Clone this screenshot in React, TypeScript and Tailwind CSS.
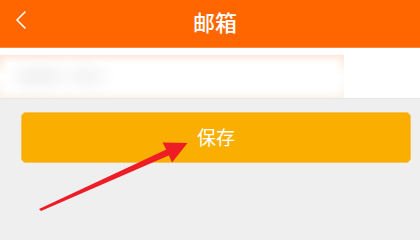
export default function App() {
  return (
    <div
      className="relative w-[420px] h-[240px] overflow-hidden bg-[#efefef]"
      style={{ fontFamily: '"Noto Sans CJK SC", "Noto Sans", sans-serif' }}
    >
      {/* header */}
      <div className="h-12 bg-[#ff6600] border-b border-[#ff8a3d] flex items-center px-[15px]">
        <svg width="12" height="18" viewBox="0 0 12 18" fill="none" className="-mt-[8px]">
          <path d="M10 1 L2 9 L10 17" stroke="#ffffff" strokeWidth="1.6" strokeLinecap="round" strokeLinejoin="round" />
        </svg>
        <div className="flex-1 flex justify-center pl-[10px]">
          <span className="text-white text-[22px] font-medium leading-none -mt-[6px]">邮箱</span>
        </div>
        <div className="w-[12px]" />
      </div>

      {/* email input row (blurred) */}
      <div className="h-[51px] bg-white border-b border-[#e6e6e6] pt-[7px]">
        <div className="w-[344px] h-[43px] bg-gradient-to-b from-[#fde6d8] via-white to-[#fbf3ea] p-[4px]">
          <div className="h-full bg-white blur-[3px] flex items-center gap-[6px] pl-[12px]">
            <div className="w-[46px] h-[16px] rounded-full bg-[#efefef] blur-[7px]" />
            <div className="w-[36px] h-[15px] rounded-full bg-[#f1f1f1] blur-[7px]" />
          </div>
        </div>
      </div>

      {/* save button */}
      <div className="ml-[21px] mr-[9px] mt-[13px] h-[51px] rounded-[5px] bg-[#f9ae00] border border-[#f7c45a] flex items-center justify-center">
        <span className="text-white text-[19px] leading-none -mt-[2px]">保存</span>
      </div>

      {/* annotation arrow */}
      <svg className="absolute left-0 top-0 pointer-events-none" width="420" height="240" viewBox="0 0 420 240">
        <path d="M39 209 L41 211 L171 154.5 L168.5 148.5 Z" fill="#ee1c25" />
        <path d="M187.5 143 L162.5 142.5 L167 151 L172 162.5 Z" fill="#ee1c25" />
      </svg>
    </div>
  );
}
